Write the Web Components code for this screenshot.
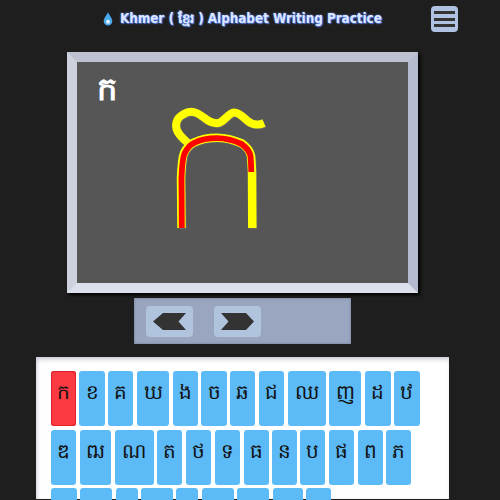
<!DOCTYPE html>
<html>
<head>
<meta charset="utf-8">
<style>
  html, body { margin: 0; padding: 0; height: 500px; overflow: hidden; background: #1e1e1e; }
</style>
</head>
<body>
<practice-app></practice-app>
<script>
const KHMER = '"DejaVu Sans", "Noto Sans", sans-serif';

class TopBar extends HTMLElement {
  constructor() {
    super();
    this.attachShadow({ mode: 'open' });
    this.shadowRoot.innerHTML = `
      <style>
        :host { display: flex; height: 38px; align-items: center; position: relative; padding-left: 102px; box-sizing: border-box; }
        h1 {
          margin: 0;
          font: bold 13.300px "DejaVu Sans Condensed", "DejaVu Sans", sans-serif;
          color: #dbe7ff;
          text-shadow: 0 0 2px #6a8cff, 1px 1px 1px #4a6fd0;
          white-space: nowrap;
          display: flex; align-items: center; gap: 6px;
        }
        svg.drop { width: 12px; height: 14px; }
        .menu {
          position: absolute; left: 431px; top: 6px;
          width: 27px; height: 26px; border-radius: 4px;
          background: #b0c2e2; display: flex; flex-direction: column;
          justify-content: center; gap: 3.400px; align-items: center;
        }
        .menu i { display: block; width: 21px; height: 3px; background: #333; }
      </style>
      <h1><svg class="drop" viewBox="0 0 10 13"><path d="M5 0C6 3 9 5.500 9 8.500A4 4 0 0 1 1 8.500C1 5.500 4 3 5 0Z" fill="#4aa8ec"/><circle cx="5" cy="9" r="1.800" fill="#e8f4ff"/></svg><span><slot></slot></span></h1>
      <div class="menu"><i></i><i></i><i></i></div>
    `;
  }
}
customElements.define('top-bar', TopBar);

class WritingBoard extends HTMLElement {
  constructor() {
    super();
    this.attachShadow({ mode: 'open' });
    const body = 'M181.500 228L181 178C181.500 165 182 158 184 153C187 147 190 144 194 142.500C201 139 209 137.700 217 137.700C226 137.700 234 140 242 143.500C247 147 250 151 251 156C251.600 162 251.700 166 252 172L252.300 228';
    const curl = 'M188 143C182 138 178 134 176.500 129C175 122 178 117 183 114.500C187 112 191 111 195 112.500C200 114 204 118 208 120.500C212 123 216 124 220 122.500C225 120 229 113 234 112.500C239 112.500 243 117 247 120.500C251 124 257 126 264 123';
    const red = 'M181.800 228L181.500 178C182 165 182.500 158 184.500 153.500C187.500 147.500 190 144.500 194 143C201 139.500 209 138.200 217 138.200C226 138.200 234 140.500 241.500 144C246.500 147.500 249.500 151 250.500 156C251 162 251.200 166 251.300 172';
    this.shadowRoot.innerHTML = `
      <style>
        :host {
          display: block; box-sizing: border-box;
          width: 351px; height: 241px; position: relative;
          background: #565656;
          border: 10px solid; border-color: #bcc2d2 #b4bad0 #dcdfec #ced2de;
          box-shadow: 2px 2px 3px #000;
        }
        .letter { position: absolute; left: 20px; top: 7px; color: #fff; font: bold 32px ${KHMER}; }
        svg { position: absolute; left: 0; top: 0; }
      </style>
      <div class="letter"><slot></slot></div>
      <svg width="331" height="221" viewBox="77 62 331 221" fill="none" stroke-linejoin="round">
        <g transform="translate(1 1)" stroke="#686868">
          <path d="${body}" stroke-width="8"/>
          <path d="${curl}" stroke-width="7.500"/>
        </g>
        <path d="${curl}" stroke="#ffff00" stroke-width="8"/>
        <path d="${body}" stroke="#ffff00" stroke-width="8.500"/>
        <path d="${red}" stroke="#ff0000" stroke-width="5.800"/>
      </svg>
    `;
  }
}
customElements.define('writing-board', WritingBoard);

class NavPanel extends HTMLElement {
  constructor() {
    super();
    this.attachShadow({ mode: 'open' });
    this.shadowRoot.innerHTML = `
      <style>
        :host {
          display: flex; box-sizing: border-box; gap: 20.500px;
          width: 217px; height: 46px; padding: 8px 0 7px 12px;
          background: #9aa6c0; box-shadow: inset 0 0 3px #707a95;
        }
        button {
          all: unset; width: 47px; height: 31px; border-radius: 4px;
          background: #b0c4de; display: flex; align-items: center; justify-content: center;
        }
        svg { width: 34px; height: 17px; }
      </style>
      <button><svg viewBox="0 0 34 17"><path d="M0 8.500L10 0H33L25.500 8.500L33 17H10Z" fill="#333"/></svg></button>
      <button><svg viewBox="0 0 34 17"><path d="M1 0H26L34 8.500L26 17H1L8.500 8.500Z" fill="#333"/></svg></button>
    `;
  }
}
customElements.define('nav-panel', NavPanel);

class KeyButton extends HTMLElement {
  constructor() {
    super();
    this.attachShadow({ mode: 'open' });
    this.shadowRoot.innerHTML = `
      <style>
        :host {
          display: block; box-sizing: border-box; height: 55px; padding-top: 8px;
          background: #5cbaf7; border-radius: 3px; text-align: center;
          font: 20px ${KHMER}; color: #111;
        }
        :host([active]) { background: #fb3a41; box-shadow: inset 0 0 0 1px #e01f2a; }
      </style>
      <slot></slot>
    `;
  }
}
customElements.define('key-button', KeyButton);

class LetterKeyboard extends HTMLElement {
  constructor() {
    super();
    this.attachShadow({ mode: 'open' });
    this.shadowRoot.innerHTML = `
      <style>
        :host {
          display: block; box-sizing: border-box; width: 413px; height: 142px;
          background: #fff; padding: 14px 0 0 14.700px;
          box-shadow: inset 0 4px 5px -2px #c0c4d0, inset 3px 0 4px -2px #d0d4dc;
        }
        .row { display: flex; gap: 3.600px; margin-bottom: 3.600px; }
      </style>
      <div class="row" id="r0"></div>
      <div class="row" id="r1"></div>
      <div class="row" id="r2"></div>
    `;
    const rows = [
      [['ក',25.2],['ខ',25.2],['គ',25.2],['ឃ',32],['ង',25.2],['ច',25.2],['ឆ',25.2],['ជ',25.2],['ឈ',38],['ញ',32],['ដ',25.8],['ឋ',25.2]],
      [['ឌ',25.3],['ឍ',31.7],['ណ',39],['ត',25],['ថ',25.3],['ទ',25.3],['ធ',24.7],['ន',24.7],['ប',24.7],['ផ',25.3],['ព',25.3],['ភ',25]],
      [['ម',26],['យ',31.7],['រ',22],['ល',31.7],['វ',22],['ស',31.7],['ហ',31.7],['ឡ',30],['អ',25.3]]
    ];
    rows.forEach((row, i) => {
      const el = this.shadowRoot.getElementById('r' + i);
      row.forEach(([ch, w]) => {
        const k = document.createElement('key-button');
        k.textContent = ch;
        k.style.width = w + 'px';
        if (ch === 'ក') k.setAttribute('active', '');
        el.appendChild(k);
      });
    });
  }
}
customElements.define('letter-keyboard', LetterKeyboard);

class PracticeApp extends HTMLElement {
  constructor() {
    super();
    this.attachShadow({ mode: 'open' });
    this.shadowRoot.innerHTML = `
      <style>
        :host { display: block; width: 500px; height: 500px; overflow: hidden; background: #1e1e1e; }
        .stack { display: flex; flex-direction: column; }
        writing-board { margin: 14px 0 0 67px; }
        nav-panel { margin: 5px 0 0 134px; }
        letter-keyboard { margin: 13px 0 0 36px; }
      </style>
      <div class="stack">
        <top-bar>Khmer ( ខ្មែរ ) Alphabet Writing Practice</top-bar>
        <writing-board>ក</writing-board>
        <nav-panel></nav-panel>
        <letter-keyboard></letter-keyboard>
      </div>
    `;
  }
}
customElements.define('practice-app', PracticeApp);
</script>
</body>
</html>
